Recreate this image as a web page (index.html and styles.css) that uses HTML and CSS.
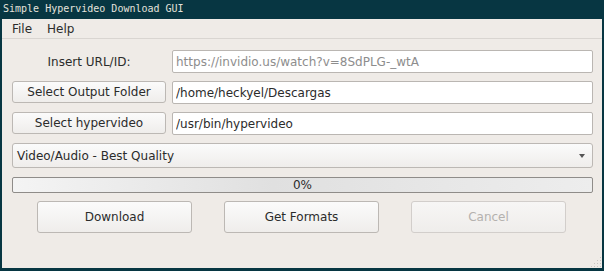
FILE: index.html
```
<!DOCTYPE html>
<html lang="en">
<head>
    <meta charset="UTF-8">
    <title>Simple Hypervideo Download GUI</title>
    <link rel="stylesheet" href="styles.css">
</head>
<body>
<div class="window">
    <div class="titlebar">Simple Hypervideo Download GUI</div>
    <div class="client">
        <div class="menubar">
            <span class="menu-item">File</span>
            <span class="menu-item">Help</span>
        </div>
        <div class="content">
            <div class="form-grid">
                <label class="field-label" for="url">Insert URL/ID:</label>
                <input class="text-input" id="url" type="text" placeholder="https://invidio.us/watch?v=8SdPLG-_wtA">

                <button class="btn">Select Output Folder</button>
                <input class="text-input" type="text" value="/home/heckyel/Descargas">

                <button class="btn">Select hypervideo</button>
                <input class="text-input" type="text" value="/usr/bin/hypervideo">
            </div>

            <div class="combo">
                <span>Video/Audio - Best Quality</span>
                <span class="combo-arrow"></span>
            </div>

            <div class="progress">0%</div>

            <div class="actions">
                <button class="btn btn-large">Download</button>
                <button class="btn btn-large">Get Formats</button>
                <button class="btn btn-large" disabled>Cancel</button>
            </div>
        </div>
        <svg class="size-grip" width="12" height="12" viewBox="0 0 12 12">
            <g fill="#c9c5c1">
                <rect x="10" y="1" width="1" height="1"/>
                <rect x="7" y="4" width="1" height="1"/><rect x="10" y="4" width="1" height="1"/>
                <rect x="4" y="7" width="1" height="1"/><rect x="7" y="7" width="1" height="1"/><rect x="10" y="7" width="1" height="1"/>
                <rect x="1" y="10" width="1" height="1"/><rect x="4" y="10" width="1" height="1"/><rect x="7" y="10" width="1" height="1"/><rect x="10" y="10" width="1" height="1"/>
            </g>
        </svg>
    </div>
</div>
</body>
</html>
```

FILE: styles.css
```
* {
    margin: 0;
    padding: 0;
    box-sizing: border-box;
}

body {
    background-color: #073642;
    font-family: 'DejaVu Sans', sans-serif;
    font-size: 12px;
    color: #2b2b2b;
}

.window {
    width: 604px;
    height: 271px;
    display: flex;
    flex-direction: column;
}

.titlebar {
    height: 19px;
    padding: 3px 0 0 3px;
    font-family: 'DejaVu Sans Mono', monospace;
    font-size: 10px;
    line-height: 12px;
    color: #e4e2dc;
}

.client {
    flex: 1;
    margin: 0 2px 3px 2px;
    background-color: #efebe7;
    position: relative;
    display: flex;
    flex-direction: column;
}

.menubar {
    height: 20px;
    display: flex;
    gap: 15px;
    padding: 3px 0 0 10px;
    border-bottom: 1px solid #d9d5d1;
    line-height: 14px;
}

.content {
    padding: 11px 9px 0 10px;
    display: flex;
    flex-direction: column;
}

.form-grid {
    display: grid;
    grid-template-columns: 154px 1fr;
    grid-auto-rows: 23px;
    column-gap: 6px;
    row-gap: 8px;
}

.field-label {
    display: flex;
    align-items: center;
    justify-content: center;
}

.text-input {
    font-family: inherit;
    font-size: 12px;
    color: #2b2b2b;
    background: #ffffff;
    border: 1px solid #bab6b2;
    border-radius: 2px;
    padding: 0 3px;
    height: 23px;
}

.text-input::placeholder {
    color: #8d8d8d;
}

.btn {
    font-family: inherit;
    font-size: 12px;
    color: #2b2b2b;
    background: linear-gradient(#fbfbfb, #efedeb);
    border: 1px solid #bcb8b4;
    border-radius: 3px;
    height: 22px;
}

.btn:disabled {
    color: #b4b1ae;
    border-color: #d2cecb;
    background: linear-gradient(#f7f6f5, #efedeb);
}

.combo {
    margin-top: 8px;
    height: 25px;
    display: flex;
    align-items: center;
    justify-content: space-between;
    padding: 0 7px 0 4px;
    background: linear-gradient(#fbfbfb, #efedeb);
    border: 1px solid #bcb8b4;
    border-radius: 3px;
}

.combo-arrow {
    width: 0;
    height: 0;
    border-left: 3.5px solid transparent;
    border-right: 3.5px solid transparent;
    border-top: 4px solid #555555;
}

.progress {
    margin-top: 9px;
    height: 16px;
    border: 1px solid #8f8c89;
    border-radius: 2px;
    background: linear-gradient(to right, #f4f4f4, #e0e0e0 45%, #ededed);
    text-align: center;
    line-height: 14px;
}

.actions {
    margin-top: 8px;
    display: flex;
    gap: 32px;
    padding: 0 27px 0 25px;
}

.btn-large {
    flex: 1;
    height: 32px;
}

.size-grip {
    position: absolute;
    right: 0;
    bottom: 0;
}
```
